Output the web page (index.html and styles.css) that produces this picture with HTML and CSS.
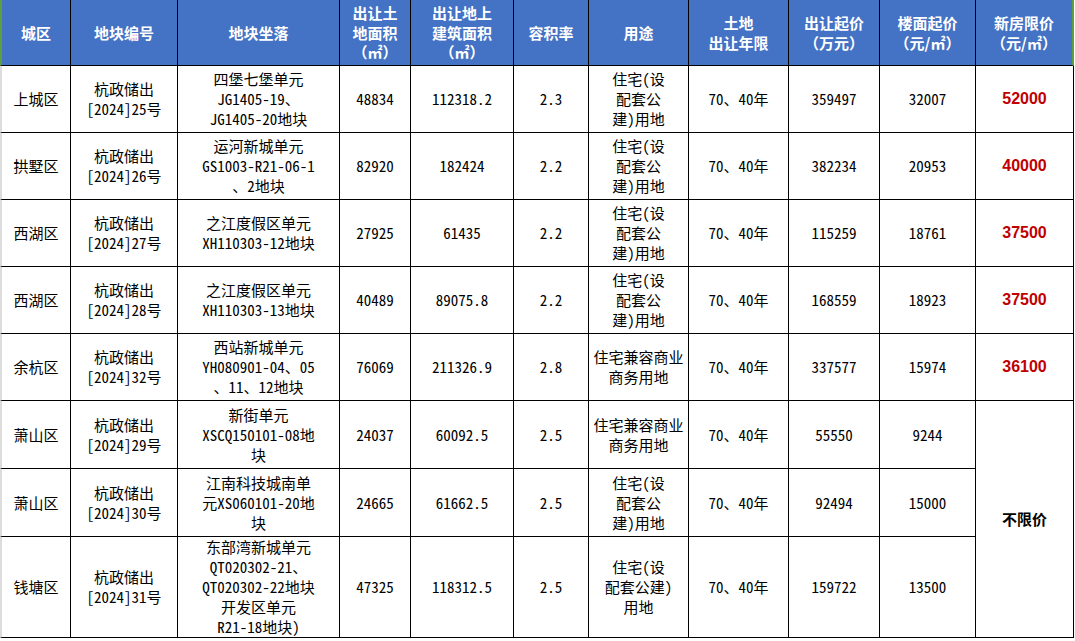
FILE: index.html
```html
<!DOCTYPE html>
<html lang="zh-CN">
<head>
<meta charset="utf-8">
<title>杭州出让地块</title>
<link rel="stylesheet" href="styles.css">
</head>
<body>
<table class="land">
  <colgroup>
    <col class="c1"><col class="c2"><col class="c3"><col class="c4"><col class="c5"><col class="c6"><col class="c7"><col class="c8"><col class="c9"><col class="c10"><col class="c11">
  </colgroup>
  <thead>
    <tr>
      <th>城区</th>
      <th>地块编号</th>
      <th>地块坐落</th>
      <th>出让土<br>地面积<br>（㎡）</th>
      <th>出让地上<br>建筑面积<br>（㎡）</th>
      <th>容积率</th>
      <th>用途</th>
      <th>土地<br>出让年限</th>
      <th>出让起价<br>（万元）</th>
      <th>楼面起价<br>（元/㎡）</th>
      <th>新房限价<br>（元/㎡）</th>
    </tr>
  </thead>
  <tbody>
    <tr>
      <td>上城区</td>
      <td>杭政储出<br>[2024]25号</td>
      <td>四堡七堡单元<br>JG1405-19、<br>JG1405-20地块</td>
      <td>48834</td>
      <td>112318.2</td>
      <td>2.3</td>
      <td>住宅(设<br>配套公<br>建)用地</td>
      <td>70、40年</td>
      <td>359497</td>
      <td>32007</td>
      <td class="limit">52000</td>
    </tr>
    <tr>
      <td>拱墅区</td>
      <td>杭政储出<br>[2024]26号</td>
      <td>运河新城单元<br>GS1003-R21-06-1<br>、2地块</td>
      <td>82920</td>
      <td>182424</td>
      <td>2.2</td>
      <td>住宅(设<br>配套公<br>建)用地</td>
      <td>70、40年</td>
      <td>382234</td>
      <td>20953</td>
      <td class="limit">40000</td>
    </tr>
    <tr>
      <td>西湖区</td>
      <td>杭政储出<br>[2024]27号</td>
      <td>之江度假区单元<br>XH110303-12地块</td>
      <td>27925</td>
      <td>61435</td>
      <td>2.2</td>
      <td>住宅(设<br>配套公<br>建)用地</td>
      <td>70、40年</td>
      <td>115259</td>
      <td>18761</td>
      <td class="limit">37500</td>
    </tr>
    <tr>
      <td>西湖区</td>
      <td>杭政储出<br>[2024]28号</td>
      <td>之江度假区单元<br>XH110303-13地块</td>
      <td>40489</td>
      <td>89075.8</td>
      <td>2.2</td>
      <td>住宅(设<br>配套公<br>建)用地</td>
      <td>70、40年</td>
      <td>168559</td>
      <td>18923</td>
      <td class="limit">37500</td>
    </tr>
    <tr>
      <td>余杭区</td>
      <td>杭政储出<br>[2024]32号</td>
      <td>西站新城单元<br>YH080901-04、05<br>、11、12地块</td>
      <td>76069</td>
      <td>211326.9</td>
      <td>2.8</td>
      <td>住宅兼容商业<br>商务用地</td>
      <td>70、40年</td>
      <td>337577</td>
      <td>15974</td>
      <td class="limit">36100</td>
    </tr>
    <tr class="r6">
      <td>萧山区</td>
      <td>杭政储出<br>[2024]29号</td>
      <td>新街单元<br>XSCQ150101-08地<br>块</td>
      <td>24037</td>
      <td>60092.5</td>
      <td>2.5</td>
      <td>住宅兼容商业<br>商务用地</td>
      <td>70、40年</td>
      <td>55550</td>
      <td>9244</td>
      <td class="nolimit" rowspan="3">不限价</td>
    </tr>
    <tr class="r7">
      <td>萧山区</td>
      <td>杭政储出<br>[2024]30号</td>
      <td>江南科技城南单<br>元XS060101-20地<br>块</td>
      <td>24665</td>
      <td>61662.5</td>
      <td>2.5</td>
      <td>住宅(设<br>配套公<br>建)用地</td>
      <td>70、40年</td>
      <td>92494</td>
      <td>15000</td>
    </tr>
    <tr class="r8">
      <td>钱塘区</td>
      <td>杭政储出<br>[2024]31号</td>
      <td>东部湾新城单元<br>QT020302-21、<br>QT020302-22地块<br>开发区单元<br>R21-18地块)</td>
      <td>47325</td>
      <td>118312.5</td>
      <td>2.5</td>
      <td>住宅(设<br>配套公建)<br>用地</td>
      <td>70、40年</td>
      <td>159722</td>
      <td>13500</td>
    </tr>
  </tbody>
</table>
</body>
</html>
```

FILE: styles.css
```css
html, body {
  margin: 0;
  padding: 0;
  background: #ffffff;
}

.land {
  border-collapse: separate;
  border-spacing: 0;
  table-layout: fixed;
  width: 1074px;
  font-family: "Noto Sans Mono CJK SC", "Noto Sans CJK SC", sans-serif;
  font-size: 15px;
  color: #000000;
}

.c1 { width: 71px; }
.c2 { width: 107px; }
.c3 { width: 162px; }
.c4 { width: 71px; }
.c5 { width: 103px; }
.c6 { width: 75px; }
.c7 { width: 100px; }
.c8 { width: 100px; }
.c9 { width: 91px; }
.c10 { width: 96px; }
.c11 { width: 98px; }

.land th,
.land td {
  box-sizing: border-box;
  padding: 0;
  text-align: center;
  vertical-align: middle;
  border-right: 1px solid #000000;
  border-bottom: 1px solid #000000;
  white-space: nowrap;
}

.land th {
  height: 66px;
  background: #4472c4;
  color: #ffffff;
  font-family: "Noto Sans CJK SC", sans-serif;
  font-weight: 700;
  font-size: 15px;
  line-height: 19.5px;
}

.land th:first-child {
  border-left: 2px solid #5e9e3c;
}

.land th:last-child {
  border-right: 2px solid #5e9e3c;
}

.land td {
  height: 67px;
  line-height: 20px;
  font-weight: 400;
}

.land td:first-child {
  border-left: 2px solid #dcdcdc;
}

.land .r6 td,
.land .r7 td {
  height: 68px;
}

.land .r8 td {
  height: 101px;
}

.land .limit {
  font-family: "Liberation Sans", Arial, sans-serif;
  font-weight: 700;
  font-size: 16px;
  color: #c00000;
}

.land .nolimit {
  font-family: "Noto Sans CJK SC", sans-serif;
  font-weight: 700;
  font-size: 15px;
}
```
